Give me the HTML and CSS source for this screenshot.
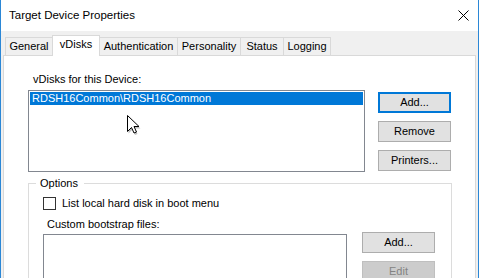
FILE: index.html
```html
<html>
    <head>
        <title>Target Device Properties</title>
        <link rel="stylesheet" href="styles.css">
    </head>
    <body>
        <div class="window">
            <div class="titlebar">
                <span class="title">Target Device Properties</span>
                <svg class="close" width="11" height="11" viewBox="0 0 11 11">
                    <path d="M0.5 0.5 L10.5 10.5 M10.5 0.5 L0.5 10.5" stroke="#000" stroke-width="1"/>
                </svg>
            </div>
            <div class="tabs">
                <div class="tab tabGeneral">General</div>
                <div class="tab tabVdisks selected">vDisks</div>
                <div class="tab tabAuth">Authentication</div>
                <div class="tab tabPers">Personality</div>
                <div class="tab tabStatus">Status</div>
                <div class="tab tabLog">Logging</div>
            </div>
            <div class="panel">
                <div class="caption">vDisks for this Device:</div>
                <div class="listRow">
                    <div class="listbox diskList">
                        <div class="item selectedItem">RDSH16Common\RDSH16Common</div>
                    </div>
                    <div class="buttonCol">
                        <div class="button default">Add...</div>
                        <div class="button">Remove</div>
                        <div class="button">Printers...</div>
                    </div>
                </div>
                <fieldset class="group">
                    <legend>Options</legend>
                    <div class="checkRow">
                        <span class="checkbox"></span>
                        <span>List local hard disk in boot menu</span>
                    </div>
                    <div class="subCaption">Custom bootstrap files:</div>
                    <div class="listRow">
                        <div class="listbox bootList"></div>
                        <div class="buttonCol second">
                            <div class="button">Add...</div>
                            <div class="button disabled">Edit</div>
                        </div>
                    </div>
                </fieldset>
                <svg class="cursor" width="14" height="21" viewBox="0 0 14 21">
                    <path d="M1.5 2.5 L1.5 18.5 L5.5 14.5 L8 20 L10.5 19 L8 13.5 L13.5 13.5 Z" fill="rgba(0,0,0,0.25)"/>
                    <path d="M0.5 0.5 L0.5 16.5 L4.5 12.5 L7 18 L9.5 17 L7 11.5 L12 11.5 Z" fill="#fff" stroke="#000" stroke-width="1" stroke-linejoin="miter"/>
                </svg>
            </div>
        </div>
    </body>
</html>
```

FILE: styles.css
```css
body{
    margin: 0;
    font-family: "Liberation Sans", Arial, sans-serif;
    font-size: 11px;
    color: #000;
    background: #f0f0f0;
}
.window{
    width: 479px;
    height: 278px;
    box-sizing: border-box;
    border-left: 1px solid #2b87d6;
    border-right: 1px solid #2b87d6;
    background: #f0f0f0;
    display: flex;
    flex-direction: column;
    overflow: hidden;
}
.titlebar{
    height: 31px;
    flex: none;
    background: #fff;
    display: flex;
    align-items: center;
    justify-content: space-between;
    padding-left: 8px;
    padding-right: 9px;
}
.title{
    font-size: 11.5px;
    line-height: 13px;
}
.close{
    display: block;
}
.tabs{
    height: 24px;
    flex: none;
    display: flex;
    align-items: flex-end;
    padding-left: 4px;
}
.tab{
    box-sizing: border-box;
    height: 18px;
    border: 1px solid #d9d9d9;
    border-bottom: none;
    margin-left: -1px;
    line-height: 17px;
    text-align: center;
    background: #f0f0f0;
}
.tab:first-child{
    margin-left: 0;
}
.tab.selected{
    height: 21px;
    margin-bottom: -1px;
    background: #fff;
    position: relative;
    z-index: 1;
}
.tabGeneral{ width: 48px; }
.tabVdisks{ width: 48px; }
.tabAuth{ width: 79px; }
.tabPers{ width: 64px; }
.tabStatus{ width: 44px; }
.tabLog{ width: 48px; }
.panel{
    flex: 1;
    margin: 0 2px;
    background: #fff;
    border: 1px solid #d9d9d9;
    position: relative;
}
.caption{
    margin-top: 17px;
    margin-left: 29px;
    line-height: 13px;
}
.listRow{
    display: flex;
}
.listbox{
    box-sizing: border-box;
    border: 1px solid #828790;
    background: #fff;
    padding: 1px;
}
.diskList{
    margin-top: 4px;
    margin-left: 24px;
    width: 337px;
    height: 82px;
}
.item{
    height: 13px;
    line-height: 13px;
    padding-left: 2px;
}
.selectedItem{
    background: #0078d7;
    color: #fff;
}
.buttonCol{
    display: flex;
    flex-direction: column;
    gap: 8px;
    margin-left: 13px;
    padding-top: 6px;
}
.button{
    box-sizing: border-box;
    width: 73px;
    height: 21px;
    border: 1px solid #adadad;
    background: #e1e1e1;
    display: flex;
    align-items: center;
    justify-content: center;
    line-height: 13px;
}
.button.default{
    border: 2px solid #0078d7;
}
.button.disabled{
    background: #cccccc;
    border-color: #bfbfbf;
    color: #838383;
}
.group{
    margin: 5px 0 0 24px;
    padding: 0 0 0 14px;
    width: 424px;
    height: 120px;
    box-sizing: border-box;
    border: 1px solid #dcdcdc;
    min-width: 0;
}
.group legend{
    margin-left: -7px;
    padding: 0 6px 0 4px;
    line-height: 13px;
}
.checkRow{
    display: flex;
    align-items: center;
    gap: 6px;
    margin-top: 7px;
    line-height: 13px;
}
.checkbox{
    box-sizing: border-box;
    width: 13px;
    height: 13px;
    border: 1px solid #333;
    background: #fff;
}
.subCaption{
    margin-top: 8px;
    margin-left: 4px;
    line-height: 13px;
}
.bootList{
    margin-top: 3px;
    width: 304px;
    height: 80px;
}
.buttonCol.second{
    margin-left: 15px;
    padding-top: 1px;
}
.cursor{
    position: absolute;
    left: 123px;
    top: 59px;
}
```
